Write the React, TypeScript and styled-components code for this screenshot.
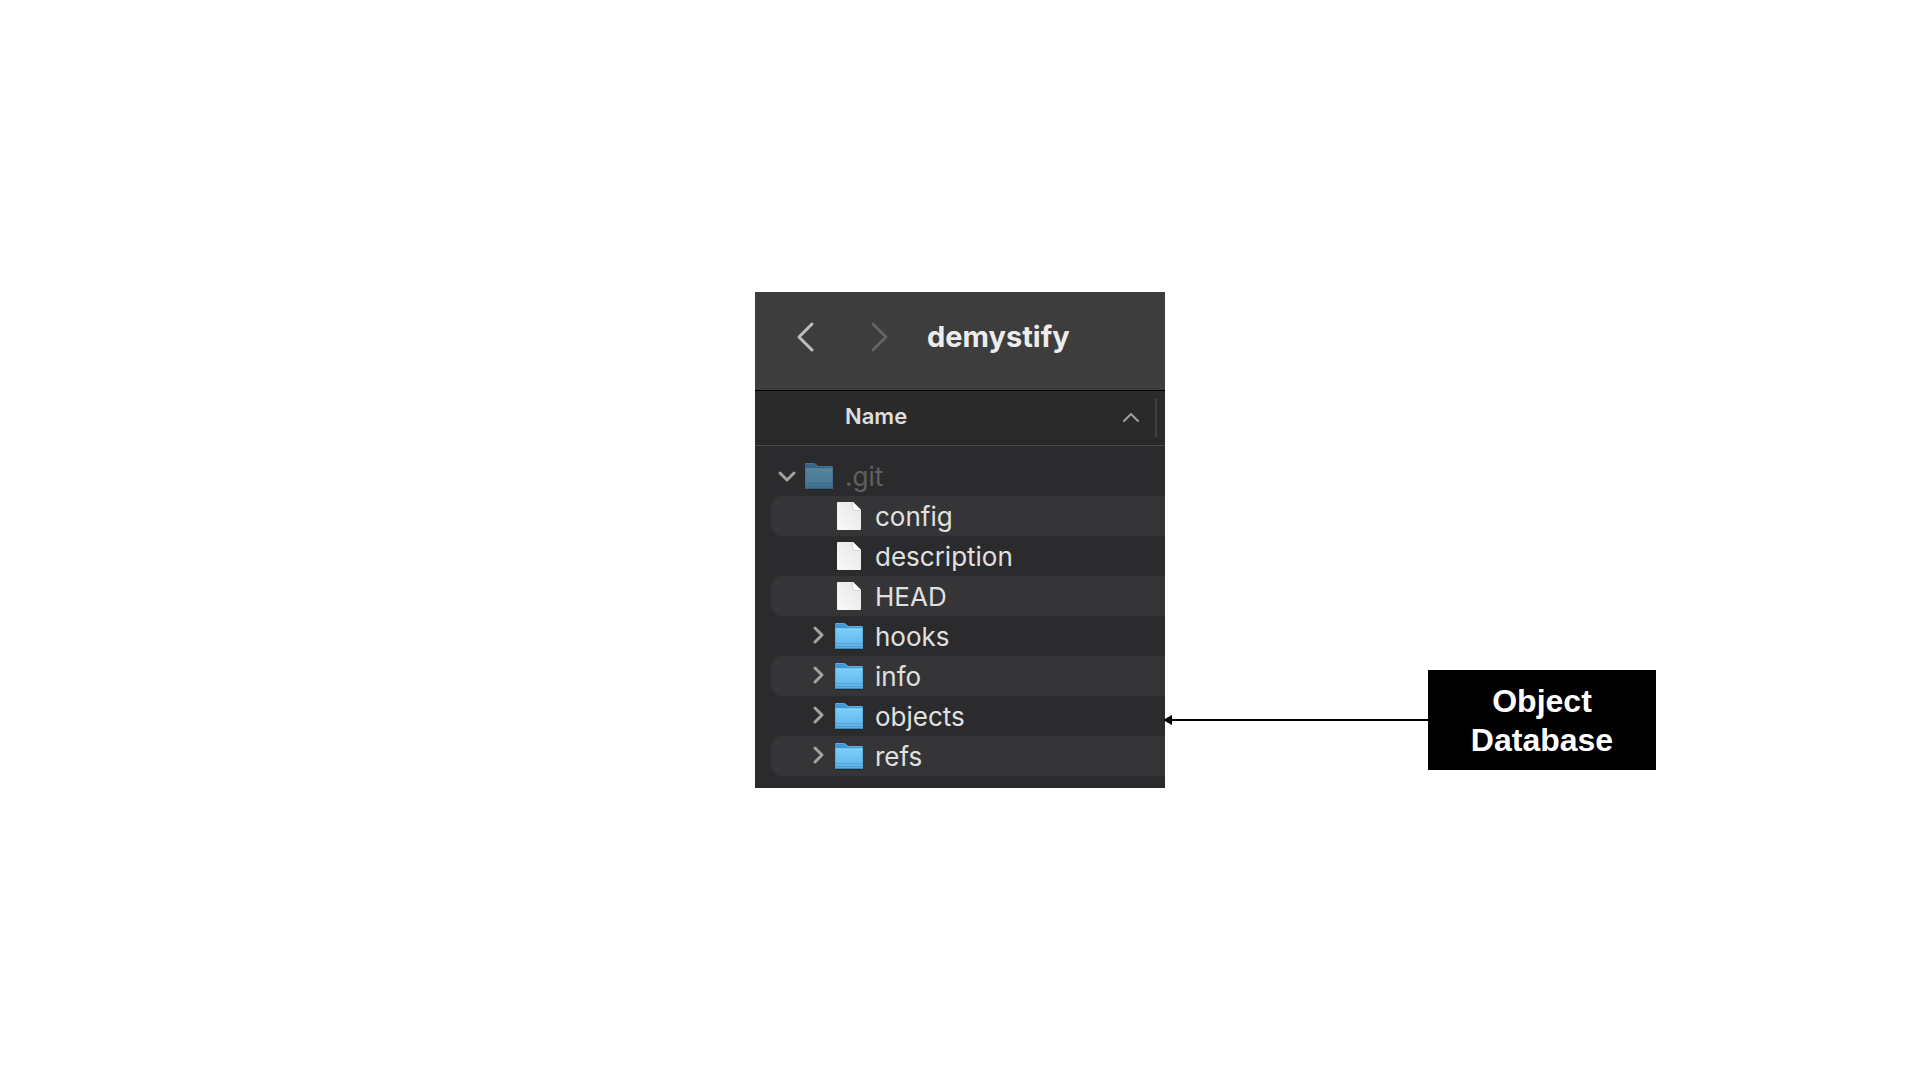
import React, { useState } from "react";
import styled, { createGlobalStyle } from "styled-components";

const GlobalStyle = createGlobalStyle`
  *, *::before, *::after { box-sizing: border-box; }
  body {
    margin: 0;
    background: #ffffff;
    font-family: Inter, "Liberation Sans", sans-serif;
  }
`;

const Slide = styled.main`
  display: grid;
  grid-template-columns: 1fr minmax(auto, 410px) 1fr;
  align-content: center;
  min-height: 100vh;
`;

const Finder = styled.section`
  grid-column: 2;
  background: #2b2b2d;
  color: #e0e0e0;
`;

const Toolbar = styled.header`
  display: flex;
  align-items: center;
  height: 99px;
  padding: 0 39px 8px;
  background: #3d3d3d;
  border-bottom: 1px solid #000000;
`;

const NavButton = styled.button<{ $dim?: boolean }>`
  display: flex;
  justify-content: center;
  width: 24px;
  padding: 0;
  border: 0;
  background: none;
  color: ${(p) => (p.$dim ? "#636363" : "#bdbdbd")};
`;

const NavGroup = styled.nav`
  display: flex;
  gap: 50px;
  margin-right: 35px;
`;

const Title = styled.h1`
  margin: 0;
  color: #ececec;
  font-size: 29px;
  font-weight: 700;
  line-height: 40px;
`;

const ColumnHeader = styled.div`
  display: flex;
  align-items: center;
  height: 55px;
  padding: 0 8px 1px 90px;
  background: #2a2a2a;
  border-bottom: 1px solid #4b4b4b;
`;

const SortButton = styled.button`
  display: flex;
  flex: 1;
  align-items: center;
  justify-content: space-between;
  padding: 0 15px 4px 0;
  border: 0;
  background: none;
  color: #dedede;
  font: 600 22px/32px Inter, "Liberation Sans", sans-serif;
`;

const SortMark = styled.span`
  display: flex;
  padding-top: 2px;
  color: #a0a0a0;
`;

const ColumnDivider = styled.span`
  width: 2px;
  height: 38px;
  background: #404040;
`;

const Tree = styled.ul`
  margin: 0;
  padding: 10px 0 12px 16px;
  list-style: none;
`;

const Row = styled.li<{ $level: number; $striped: boolean }>`
  display: flex;
  align-items: center;
  height: 40px;
  padding-left: ${(p) => 4 + p.$level * 30}px;
  border-radius: 10px 0 0 10px;
  background: ${(p) => (p.$striped ? "#353537" : "transparent")};
`;

const Disclosure = styled.button`
  display: flex;
  align-items: center;
  justify-content: center;
  width: 24px;
  height: 24px;
  padding: 0;
  border: 0;
  background: none;
  color: #a2a2a2;
`;

const DisclosureSpace = styled.span`
  width: 24px;
`;

const IconSlot = styled.span<{ $dim: boolean }>`
  display: flex;
  justify-content: center;
  width: 28px;
  margin: 0 12px 0 6px;
  opacity: ${(p) => (p.$dim ? 0.55 : 1)};
`;

const FileName = styled.span<{ $dim: boolean }>`
  padding-top: 2px;
  color: ${(p) => (p.$dim ? "#5f5f61" : "#e0e0e0")};
  font-size: 26px;
  line-height: 38px;
`;

const Callout = styled.aside`
  grid-column: 3;
  display: flex;
  align-items: center;
  align-self: end;
  margin: 0 264px 18px -2px;
`;

const Connector = styled.div`
  display: flex;
  flex: 1;
  align-items: center;
`;

const ConnectorLine = styled.span`
  flex: 1;
  height: 2px;
  background: #000000;
`;

const CalloutBox = styled.p`
  width: 228px;
  margin: 0;
  padding: 12px 32px 10px;
  background: #000000;
  color: #ffffff;
  font: 700 32px/39px "Liberation Sans", Arial, sans-serif;
  text-align: center;
`;

function Chevron({ points, width, height, stroke }: { points: string; width: number; height: number; stroke: number }) {
  return (
    <svg width={width} height={height} fill="none" stroke="currentColor" strokeWidth={stroke} strokeLinecap="round" strokeLinejoin="round" aria-hidden="true">
      <polyline points={points} />
    </svg>
  );
}

function FolderIcon() {
  return (
    <svg width="28" height="28" viewBox="0 0 28 28" aria-hidden="true">
      <defs>
        <linearGradient id="folderFront" x1="0" y1="0" x2="0" y2="1">
          <stop offset="0" stopColor="#7bcdf8" />
          <stop offset="0.7" stopColor="#66baee" />
          <stop offset="1" stopColor="#54a9e0" />
        </linearGradient>
      </defs>
      <path d="M1 27.500h26" stroke="#1d1d1f" opacity="0.6" />
      <path d="M0 2q0-1 1-1h7.500q1 0 1.700.6l2.300 1.800q.8.600 1.800.6H27q1 0 1 1v4H0z" fill="#4296d3" />
      <path d="M1 1.500h7.500q.8 0 1.400.5l2.300 1.800q.8.700 2.100.7H27" fill="none" stroke="#5fb0e3" />
      <path d="M0 6.500h28V26q0 1-1 1H1q-1 0-1-1z" fill="url(#folderFront)" />
      <path d="M1 7h26" stroke="#8ad8fb" />
      <path d="M.5 7v19M27.500 7v19" stroke="#4c9fd6" opacity="0.6" />
      <path d="M0 21.500h28M0 24.500h28" stroke="#4798cf" opacity="0.6" />
      <path d="M1 26.500h26" stroke="#3c8bc2" />
    </svg>
  );
}

function DocumentIcon() {
  return (
    <svg width="24" height="28" viewBox="0 0 24 28" aria-hidden="true">
      <defs>
        <linearGradient id="paper" x1="1" y1="0" x2="0" y2="1">
          <stop offset="0" stopColor="#e6e6e6" />
          <stop offset="0.5" stopColor="#efefef" />
          <stop offset="1" stopColor="#fbfbfb" />
        </linearGradient>
      </defs>
      <path d="M1 0h15l8 8v19q0 1-1 1H1q-1 0-1-1V1q0-1 1-1z" fill="url(#paper)" />
      <path d="M15.500 0v7.500q0 1 1 1H24" fill="#bdbdbd" />
      <path d="M16 0v7q0 1 1 1h7z" fill="#fdfdfd" />
    </svg>
  );
}

type Entry = { name: string; kind: "folder" | "file" };

const entries: Entry[] = [
  { name: "config", kind: "file" },
  { name: "description", kind: "file" },
  { name: "HEAD", kind: "file" },
  { name: "hooks", kind: "folder" },
  { name: "info", kind: "folder" },
  { name: "objects", kind: "folder" },
  { name: "refs", kind: "folder" },
];

export default function App() {
  const [open, setOpen] = useState(true);

  return (
    <>
      <GlobalStyle />
      <Slide>
        <Finder>
          <Toolbar>
            <NavGroup>
              <NavButton type="button" aria-label="Back">
                <Chevron width={20} height={32} points="16,3 3,16 16,29" stroke={3} />
              </NavButton>
              <NavButton type="button" aria-label="Forward" $dim>
                <Chevron width={20} height={32} points="3,3 16,16 3,29" stroke={3} />
              </NavButton>
            </NavGroup>
            <Title>demystify</Title>
          </Toolbar>
          <ColumnHeader>
            <SortButton type="button">
              Name
              <SortMark>
                <Chevron width={18} height={12} points="2,10 9,3 16,10" stroke={2} />
              </SortMark>
            </SortButton>
            <ColumnDivider />
          </ColumnHeader>
          <Tree>
            <Row $level={0} $striped={false}>
              <Disclosure type="button" aria-label="Toggle .git" aria-expanded={open} onClick={() => setOpen(!open)}>
                <Chevron width={20} height={20} points={open ? "3,7 10,14 17,7" : "7,3 14,10 7,17"} stroke={3} />
              </Disclosure>
              <IconSlot $dim>
                <FolderIcon />
              </IconSlot>
              <FileName $dim>.git</FileName>
            </Row>
            {open &&
              entries.map((entry, i) => (
                <Row key={entry.name} $level={1} $striped={i % 2 === 0}>
                  {entry.kind === "folder" ? (
                    <Disclosure type="button" aria-label={`Expand ${entry.name}`}>
                      <Chevron width={20} height={20} points="8,2 15,9 8,16" stroke={3} />
                    </Disclosure>
                  ) : (
                    <DisclosureSpace />
                  )}
                  <IconSlot $dim={false}>{entry.kind === "folder" ? <FolderIcon /> : <DocumentIcon />}</IconSlot>
                  <FileName $dim={false}>{entry.name}</FileName>
                </Row>
              ))}
          </Tree>
        </Finder>
        <Callout>
          <Connector aria-hidden="true">
            <svg width="9" height="10" viewBox="0 0 9 10">
              <path d="M0 5 9 0v10z" fill="#000000" />
            </svg>
            <ConnectorLine />
          </Connector>
          <CalloutBox>
            Object
            <br />
            Database
          </CalloutBox>
        </Callout>
      </Slide>
    </>
  );
}
